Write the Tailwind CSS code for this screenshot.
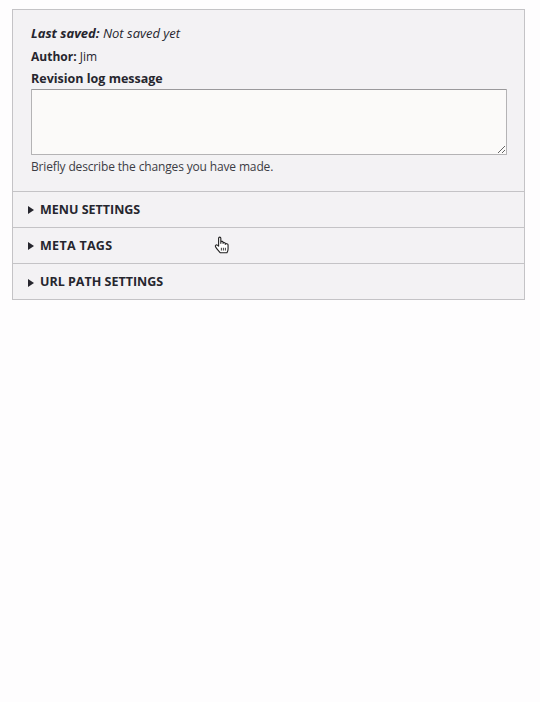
<!DOCTYPE html>
<html lang="en">
<head>
    <meta charset="UTF-8">
    <title>Revision</title>
    <script src="https://cdn.jsdelivr.net/npm/@tailwindcss/browser@4"></script>
</head>
<body class="bg-[#fefdfe] h-[702px] overflow-hidden font-['Open_Sans',sans-serif] text-[#26262e]">
    <div class="mx-3 mt-[9px] w-[513px] border border-[#c4c3c6] bg-[#f3f2f4]">
        <!-- Revision block -->
        <div class="h-[181px] px-[18px] pt-[14px] text-[13px] leading-[18px]">
            <p class="italic"><b>Last saved:</b> Not saved yet</p>
            <p class="mt-[6px] text-[12px]"><b>Author:</b> Jim</p>
            <label class="block mt-[4px] font-bold text-[12.5px]">Revision log message</label>
            <textarea class="block mt-[1px] w-[476px] h-[66px] border border-[#b4b3b5] border-t-[#9a999b] rounded-[1px] bg-[#fbfaf9]"></textarea>
            <p class="mt-[3px] text-[12px] text-[#3c3c44] tracking-[-0.15px]">Briefly describe the changes you have made.</p>
        </div>
        <!-- Collapsed sections -->
        <div class="h-[36px] border-t border-[#c4c3c6] pl-[15px] pt-[1px] flex items-center gap-[6px] font-bold text-[12.5px]">
            <svg class="w-[6px] h-[8px]" viewBox="0 0 6 8"><path d="M0 0L6 4L0 8Z" fill="#26262e"/></svg>
            <span>MENU SETTINGS</span>
        </div>
        <div class="relative h-[36px] border-t border-[#c4c3c6] pl-[15px] pt-[1px] flex items-center gap-[6px] font-bold text-[12.5px]">
            <svg class="w-[6px] h-[8px]" viewBox="0 0 6 8"><path d="M0 0L6 4L0 8Z" fill="#26262e"/></svg>
            <span class="tracking-[0.3px]">META TAGS</span>
            <!-- hand cursor -->
            <svg class="absolute left-[201px] top-[7px] w-[17px] h-[20px]" viewBox="0 0 15 18">
                <path d="M4 10V3C4 1.6 6 1.6 6 3V7.5V6.5C6 5.4 8 5.4 8 6.5V7.5C8 6.5 10 6.5 10 7.6V8.4C10 7.5 12.5 7.6 12.5 8.8V12.5C12.5 14 12 15 11.5 16H5.5C4.5 14.5 2.5 13 1.2 10.5C0.6 9.3 2 8.3 3 9.3Z" fill="#fff" stroke="#222" stroke-width="1" stroke-linejoin="round"/>
                <path d="M6.5 11.5V14M8.3 11.5V14M10.1 11.5V14" stroke="#222" stroke-width="0.8"/>
            </svg>
        </div>
        <div class="h-[36px] border-t border-[#c4c3c6] pl-[15px] pt-[2px] flex items-center gap-[6px] font-bold text-[12.5px]">
            <svg class="w-[6px] h-[8px]" viewBox="0 0 6 8"><path d="M0 0L6 4L0 8Z" fill="#26262e"/></svg>
            <span>URL PATH SETTINGS</span>
        </div>
    </div>
</body>
</html>
